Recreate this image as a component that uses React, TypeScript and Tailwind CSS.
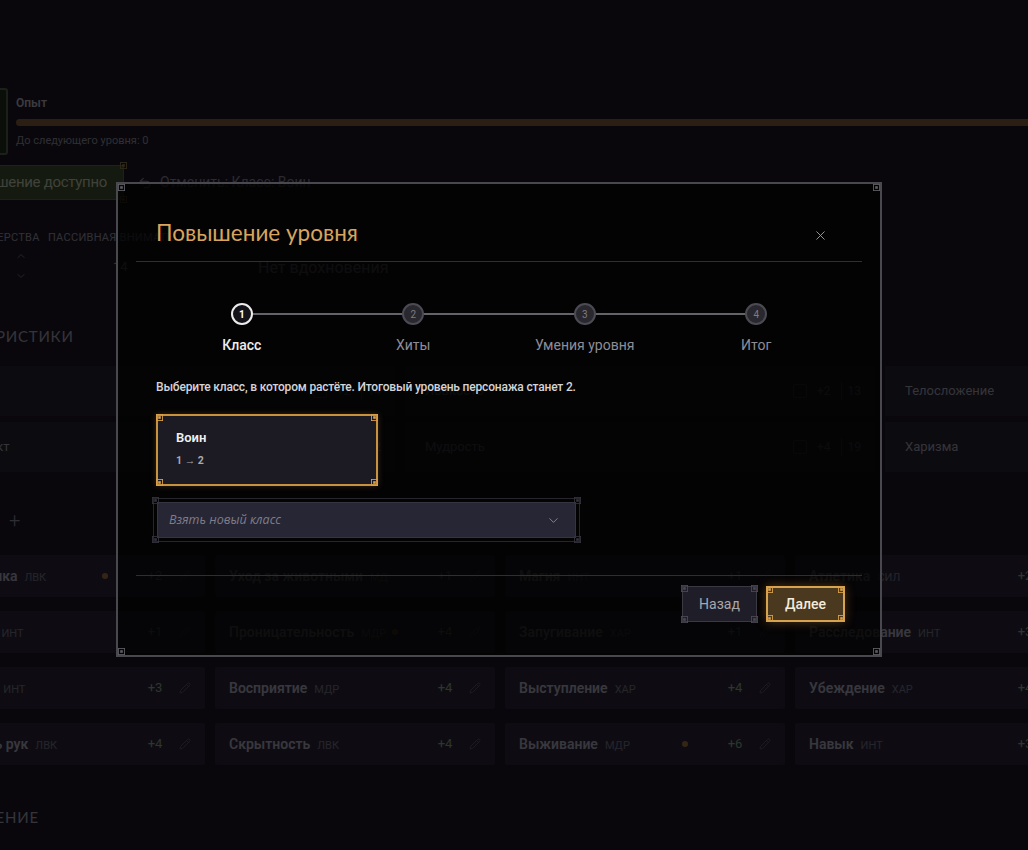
import { ChevronDown, ChevronUp, Pencil, Undo2, X } from "lucide-react";

type Skill = { name: string; attr: string; value: string; prof?: boolean };

const skills: Skill[] = [
  { name: "Акробатика", attr: "ЛВК", value: "+2", prof: true },
  { name: "Уход за животными", attr: "МДР", value: "+1" },
  { name: "Магия", attr: "ИНТ", value: "+1" },
  { name: "Атлетика", attr: "СИЛ", value: "+2" },
  { name: "История", attr: "ИНТ", value: "+1" },
  { name: "Проницательность", attr: "МДР", value: "+4", prof: true },
  { name: "Запугивание", attr: "ХАР", value: "+1" },
  { name: "Расследование", attr: "ИНТ", value: "+3" },
  { name: "Природа", attr: "ИНТ", value: "+3" },
  { name: "Восприятие", attr: "МДР", value: "+4" },
  { name: "Выступление", attr: "ХАР", value: "+4" },
  { name: "Убеждение", attr: "ХАР", value: "+4" },
  { name: "Ловкость рук", attr: "ЛВК", value: "+4" },
  { name: "Скрытность", attr: "ЛВК", value: "+4" },
  { name: "Выживание", attr: "МДР", value: "+6", prof: true },
  { name: "Навык", attr: "ИНТ", value: "+3" },
];

const abilities = [
  { name: "Сила", mod: "+2", score: "14" },
  { name: "Ловкость", mod: "+2", score: "13" },
  { name: "Телосложение", mod: "+1", score: "12" },
  { name: "Интеллект", mod: "+1", score: "12" },
  { name: "Мудрость", mod: "+4", score: "19" },
  { name: "Харизма", mod: "+0", score: "10" },
];

const steps = ["Класс", "Хиты", "Умения уровня", "Итог"];

// little square ornament that sits on the corners of framed boxes
function Corner({ pos, tone }: { pos: string; tone: string }) {
  return (
    <svg viewBox="0 0 8 8" className={`pointer-events-none absolute h-[7px] w-[7px] ${pos} ${tone}`} fill="none" stroke="currentColor">
      <rect x="0.5" y="0.5" width="7" height="7" />
      <rect x="2.5" y="2.5" width="3" height="3" fill="currentColor" stroke="none" />
    </svg>
  );
}

function Corners({ tone, inside }: { tone: string; inside?: boolean }) {
  if (inside) {
    return (
      <>
        <Corner tone={tone} pos="left-0 top-0" />
        <Corner tone={tone} pos="right-0 top-0" />
        <Corner tone={tone} pos="left-0 bottom-0" />
        <Corner tone={tone} pos="right-0 bottom-0" />
      </>
    );
  }
  return (
    <>
      <Corner tone={tone} pos="-left-[2px] -top-[2px]" />
      <Corner tone={tone} pos="-right-[2px] -top-[2px]" />
      <Corner tone={tone} pos="-left-[2px] -bottom-[2px]" />
      <Corner tone={tone} pos="-right-[2px] -bottom-[2px]" />
    </>
  );
}

function SheetBehind() {
  return (
    <div className="ml-[-75px] w-[1180px] pt-[88px]">
      {/* experience */}
      <div className="flex h-[67px]">
        <div className="ml-[15px] h-[67px] w-[68px] rounded-[3px] border-2 border-[#5a6e52] bg-[#243423]" />
        <div className="flex-1 pl-[8px] pt-[7px]">
          <p className="text-[12px] font-semibold leading-4 text-[#c5c4d4]">Опыт</p>
          <div className="mt-[8px] h-[7px] w-full rounded-full bg-[#8f6740]" />
          <p className="mt-[7px] text-[11px] leading-4 text-[#9d9aad]">До следующего уровня: 0</p>
        </div>
      </div>

      <div className="mt-[10px] flex h-[35px] items-center">
        <div className="relative flex h-[35px] w-[199px] items-center justify-end whitespace-nowrap border border-[#5e7448] bg-[#445733] pr-[16px] text-[15px] tracking-[-0.02em] text-[#d3dcc2]">
          Повышение доступно
          <Corner tone="text-[#9a8a5a]" pos="-right-[4px] -top-[4px]" />
          <Corner tone="text-[#9a8a5a]" pos="-right-[4px] -bottom-[4px]" />
        </div>
        <div className="ml-[14px] flex items-center gap-2 text-[14px] text-[#8e8ca2]">
          <Undo2 className="h-[14px] w-[14px]" />
          <span>Отменить: Класс: Воин</span>
        </div>
      </div>

      {/* quick stats */}
      <div className="mt-[24px] flex gap-[10px] pt-[6px]">
        <div className="h-[62px] w-[106px]">
          <p className="whitespace-nowrap text-right text-[11px] uppercase leading-4 tracking-wide text-[#a5a2b5]">
            Бонус мастерства
          </p>
          <div className="ml-[90px] mt-[4px] flex flex-col text-[#7a788e]">
            <ChevronUp className="h-3 w-3" />
            <ChevronDown className="mt-[8px] h-3 w-3" />
          </div>
        </div>
        <div className="h-[62px] w-[190px] pl-[7px]">
          <p className="whitespace-nowrap text-[11px] uppercase leading-4 tracking-wide text-[#a5a2b5]">Пассивная внимательность</p>
          <p className="mt-[11px] pl-[65px] text-[13px] text-[#b4b1c4]">14</p>
        </div>
        <div className="-mt-[6px] flex h-[62px] w-[220px] items-end pb-[6px] pl-[17px]">
          <p className="text-[16px] text-[#b4b1c4]">Нет вдохновения</p>
        </div>
      </div>

      <h3 className="mt-[34px] font-['Lato',sans-serif] text-[15px] uppercase leading-5 tracking-[0.05em] text-[#b0adc0]">
        Характеристики
      </h3>

      <div className="mt-[20px] grid grid-cols-[repeat(3,470px)] gap-x-[10px] gap-y-[6px]">
        {abilities.map((a) => (
          <div key={a.name} className="flex h-[50px] items-center justify-between bg-[#2a2636] pl-[20px] pr-[14px]">
            <span className="text-[13px] text-[#b0adc0]">{a.name}</span>
            <span className="flex items-center gap-[10px] text-[12px] text-[#8e8ba2]">
              <span className="h-[14px] w-[14px] rounded-[2px] border border-[#5e5b70]" />
              <span>{a.mod}</span>
              <span className="border-l border-[#5e5b70] pl-[6px]">{a.score}</span>
            </span>
          </div>
        ))}
      </div>

      <div className="mt-[34px] flex h-[28px] items-center pl-[84px] text-[20px] font-light text-[#9a97ad]">+</div>

      <div className="mt-[21px] grid grid-cols-[repeat(4,280px)] gap-x-[10px] gap-y-[14px]">
        {skills.map((s) => (
          <div key={s.name} className="flex h-[42px] items-center rounded-[3px] bg-[#2f2b3c] pl-[14px] pr-[12px]">
            <span className="flex flex-1 items-baseline gap-[7px] truncate">
              <span className="text-[14px] font-semibold text-[#bcb9cf]">{s.name}</span>
              <span className="text-[11px] uppercase text-[#7f7c93]">{s.attr}</span>
            </span>
            <span className="mr-[30px] flex w-[12px] justify-center">
              {s.prof && <span className="h-[6px] w-[6px] rounded-full bg-[#b08048]" />}
            </span>
            <span className="w-[28px] text-center text-[13px] text-[#8fb49b]">{s.value}</span>
            <Pencil className="ml-[8px] h-[12px] w-[16px] text-[#5e5b6e]" />
          </div>
        ))}
      </div>

      <h3 className="mt-[42px] font-['Lato',sans-serif] text-[15px] uppercase leading-5 tracking-[0.05em] text-[#b0adc0]">
        Снаряжение
      </h3>
    </div>
  );
}

function LevelUpDialog() {
  return (
    <div className="absolute left-[116px] top-[182px] w-[766px] border-2 border-[#48484e] bg-[#020203]/[0.78]">
      <Corners tone="text-[#5e5e64]" inside />

      <div className="mx-[18px] flex items-center justify-between border-b border-[#2e2e34] pb-[13px] pl-5 pr-[34px] pt-[34px]">
        <h2 className="font-['Lato',sans-serif] text-[22.5px] leading-[30px] text-[#d9a55e]">Повышение уровня</h2>
        <X className="mt-[5px] h-[15px] w-[15px] text-[#9c9ca3]" strokeWidth={1.5} />
      </div>

      <div className="px-[38px]">
        <div className="relative mt-[41px] grid grid-cols-4">
          <div className="absolute left-[12.5%] right-[12.5%] top-[10px] h-[2px] bg-[#636369]" />
          {steps.map((label, i) => (
            <div key={label} className="relative flex flex-col items-center">
              <div
                className={
                  i === 0
                    ? "flex h-[22px] w-[22px] items-center justify-center rounded-full border-2 border-[#ececec] bg-[#131218] text-[10px] font-bold text-white"
                    : "flex h-[22px] w-[22px] items-center justify-center rounded-full border-2 border-[#4c4b54] bg-[#29282f] text-[10px] text-[#7d7c86]"
                }
              >
                {i + 1}
              </div>
              <span
                className={
                  i === 0
                    ? "mt-[10px] text-[14px] font-medium leading-5 text-[#ececec]"
                    : "mt-[10px] text-[14px] leading-5 text-[#8e8d96]"
                }
              >
                {label}
              </span>
            </div>
          ))}
        </div>

        <p className="mt-[23px] text-[12px] font-medium leading-[18px] tracking-[-0.015em] text-[#d4d4d8]">
          Выберите класс, в котором растёте. Итоговый уровень персонажа станет 2.
        </p>

        <div className="relative mt-[18px] h-[72px] w-[222px] border-2 border-[#c8923f] bg-[#1c1b24] pl-[18px] pt-[13px] shadow-[0_0_6px_rgba(200,146,63,0.25)]">
          <Corners tone="text-[#d9a04c]" />
          <p className="text-[13px] font-semibold leading-[18px] text-[#f0f0f2]">Воин</p>
          <p className="mt-[7px] text-[10.5px] font-bold leading-[14px] text-[#a9a9ae]">1 → 2</p>
        </div>

        <div className="relative -ml-[3px] mt-[12px] h-[44px] w-[427px] border border-[#27262e] p-[3px]">
          <Corners tone="text-[#34333c]" />
          <div className="flex h-full items-center justify-between border border-[#353441] bg-[#272634] pl-[11px] pr-[14px]">
            <span className="font-['Open_Sans',sans-serif] text-[12.5px] italic text-[#7f7d8a]">Взять новый класс</span>
            <ChevronDown className="h-[15px] w-[15px] text-[#8a8894]" strokeWidth={1.5} />
          </div>
        </div>
      </div>

      <div className="mx-[18px] mt-[33px] border-t border-[#2e2e34]" />

      <div className="flex justify-end gap-[9px] pb-[33px] pr-[35px] pt-[10px]">
        <button className="relative h-[36px] w-[75px] border border-[#3a3944] bg-[#1f1e28] text-[14px] text-[#a7a7ac]">
          <Corners tone="text-[#4a4954]" />
          Назад
        </button>
        <button className="relative h-[36px] w-[79px] border-2 border-[#d6a350] bg-[#4a381f] text-[14px] font-medium text-[#f3ecdc] shadow-[0_0_10px_rgba(214,150,60,0.35)]">
          <Corners tone="text-[#d9a04c]" />
          Далее
        </button>
      </div>
    </div>
  );
}

export default function App() {
  return (
    <div className="relative h-screen w-full overflow-hidden bg-[#1e1a28] font-['Roboto',sans-serif]">
      <SheetBehind />
      <div className="absolute inset-0 bg-black/70" />
      <LevelUpDialog />
    </div>
  );
}
